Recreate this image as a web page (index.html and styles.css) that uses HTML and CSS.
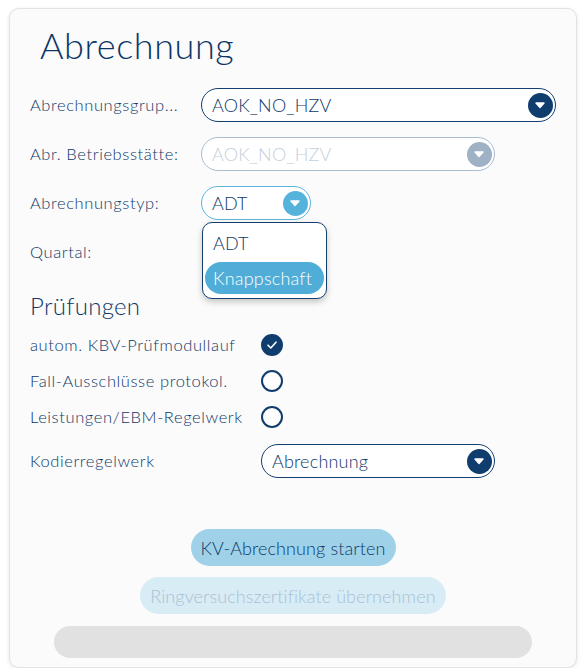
FILE: index.html
```html
<!DOCTYPE html>
<html lang="de">
<head>
<meta charset="utf-8">
<title>Abrechnung</title>
<link rel="stylesheet" href="styles.css">
</head>
<body>
<div class="card">
  <h1 class="title">Abrechnung</h1>

  <div class="form">
    <div class="label">Abrechnungsgrup...</div>
    <div class="select sel-main w-355">
      <span class="value">AOK_NO_HZV</span>
      <span class="arrow"><svg viewBox="-12 -12 24 24" width="24" height="24"><path d="M-4 -2 L4 -2 L0 2.5 Z" fill="#fff" stroke="#fff" stroke-width="1.4" stroke-linejoin="round"/></svg></span>
    </div>

    <div class="label">Abr. Betriebsstätte:</div>
    <div class="select sel-disabled w-294">
      <span class="value">AOK_NO_HZV</span>
      <span class="arrow"><svg viewBox="-12 -12 24 24" width="24" height="24"><path d="M-4 -2 L4 -2 L0 2.5 Z" fill="#fff" stroke="#fff" stroke-width="1.4" stroke-linejoin="round"/></svg></span>
    </div>

    <div class="label">Abrechnungstyp:</div>
    <div class="select-wrap">
      <div class="select sel-active w-110">
        <span class="value">ADT</span>
        <span class="arrow"><svg viewBox="-12 -12 24 24" width="24" height="24"><path d="M-4 -2 L4 -2 L0 2.5 Z" fill="#fff" stroke="#fff" stroke-width="1.4" stroke-linejoin="round"/></svg></span>
      </div>
      <div class="menu">
        <div class="option">ADT</div>
        <div class="option selected">Knappschaft</div>
      </div>
    </div>

    <div class="label">Quartal:</div>
    <div class="empty"></div>
  </div>

  <h2 class="subtitle">Prüfungen</h2>

  <div class="checks">
    <div class="label">autom. KBV-Prüfmodullauf</div>
    <div class="check checked"><svg viewBox="0 0 22 22" width="22" height="22"><path d="M7 11.2 L9.8 14 L15 8.2" fill="none" stroke="#fff" stroke-width="1.6" stroke-linecap="round" stroke-linejoin="round"/></svg></div>

    <div class="label">Fall-Ausschlüsse protokol.</div>
    <div class="check"></div>

    <div class="label">Leistungen/EBM-Regelwerk</div>
    <div class="check"></div>

    <div class="label kod">Kodierregelwerk</div>
    <div class="select sel-main w-234 kod">
      <span class="value">Abrechnung</span>
      <span class="arrow"><svg viewBox="-12 -12 24 24" width="24" height="24"><path d="M-4 -2 L4 -2 L0 2.5 Z" fill="#fff" stroke="#fff" stroke-width="1.4" stroke-linejoin="round"/></svg></span>
    </div>
  </div>

  <div class="actions">
    <button class="btn btn-primary">KV-Abrechnung starten</button>
    <button class="btn btn-disabled">Ringversuchszertifikate übernehmen</button>
    <div class="progress"></div>
  </div>
</div>
</body>
</html>
```

FILE: styles.css
```css
* { box-sizing: border-box; }

html, body {
  margin: 0;
  padding: 0;
  background: #ffffff;
}

body {
  font-family: Lato, "Noto Sans", "Liberation Sans", sans-serif;
  font-weight: 300;
  color: #0f3767;
  padding: 8px 0 0 9px;
}

.card {
  width: 568px;
  height: 660px;
  background: #fbfbfb;
  border: 1px solid #e3e3e3;
  border-radius: 10px;
  box-shadow: 0 1px 4px rgba(0, 0, 0, 0.10);
  padding: 14px 0 0 20px;
  display: flex;
  flex-direction: column;
}

.title {
  margin: 0 0 21px 10px;
  font-size: 36px;
  line-height: 44px;
  font-weight: 300;
  color: #0b3566;
  letter-spacing: 0.6px;
}

.form {
  display: grid;
  grid-template-columns: 171px auto;
  grid-auto-rows: 34px;
  row-gap: 15px;
  align-items: center;
}

.label {
  font-size: 16.5px;
  letter-spacing: 0.6px;
  color: #0e3767;
  white-space: nowrap;
}

.select {
  position: relative;
  height: 34px;
  border-radius: 17px;
  border: 1.5px solid #123f6f;
  background: #ffffff;
  display: flex;
  align-items: center;
  padding-left: 10px;
  font-size: 18px;
  letter-spacing: 0.2px;
  color: #0e3767;
}

.select .value { flex: 1; }

.select .arrow {
  width: 25px;
  height: 25px;
  border-radius: 50%;
  background: #0f3d6e;
  margin-right: 2.5px;
  display: flex;
  align-items: center;
  justify-content: center;
}

.w-355 { width: 355px; }
.w-294 { width: 294px; }
.w-110 { width: 110px; }
.w-234 { width: 234px; }

.sel-disabled {
  border-color: #a9bccf;
  color: #c2cfdc;
}
.sel-disabled .arrow { background: #9fb1c4; }

.sel-active {
  border-color: #5bb6dc;
}
.sel-active .arrow { background: #55b2da; }

.select-wrap {
  position: relative;
  width: 110px;
  height: 34px;
}

.menu {
  position: absolute;
  top: 36px;
  left: 1px;
  width: 125px;
  height: 77px;
  background: #ffffff;
  border: 1.5px solid #143f6e;
  border-radius: 10px;
  box-shadow: 0 3px 6px rgba(0, 0, 0, 0.22);
  padding: 5px 2px 2px 2px;
  z-index: 5;
}

.option {
  height: 30px;
  display: flex;
  align-items: center;
  padding-left: 8px;
  font-size: 18px;
  letter-spacing: 0.2px;
  color: #0e3767;
}

.option.selected {
  margin-top: 4px;
  height: 32px;
  border-radius: 16px;
  background: #4fadd7;
  color: #ffffff;
}

.subtitle {
  margin: 22px 0 0 0;
  font-size: 24px;
  line-height: 30px;
  font-weight: 300;
  color: #0e3767;
  letter-spacing: 0.3px;
}

.checks {
  margin-top: 12px;
  display: grid;
  grid-template-columns: 231px auto;
  grid-template-rows: 24px 24px 24px 34px;
  row-gap: 12px;
  align-items: center;
}

.check {
  width: 22px;
  height: 22px;
  border-radius: 50%;
  border: 2px solid #113d6d;
  background: #ffffff;
}

.check.checked {
  background: #0f3d6e;
  border-color: #0f3d6e;
  display: flex;
  align-items: center;
  justify-content: center;
}
.check.checked svg { margin: -2px; }

.kod { margin-top: 6px; }

.actions {
  margin-left: -20px;
  margin-top: 54px;
  display: flex;
  flex-direction: column;
  align-items: center;
}

.btn {
  font-family: inherit;
  font-weight: 300;
  border: none;
  border-radius: 19px;
  height: 37px;
  font-size: 18px;
  letter-spacing: 0.1px;
  padding: 0;
}

.btn-primary {
  width: 205px;
  background: #9fd2e9;
  color: #0f3a6a;
}

.btn-disabled {
  margin-top: 11px;
  width: 306px;
  background: #d8ecf6;
  color: #a8c1d3;
}

.progress {
  margin-top: 12px;
  width: 478px;
  height: 32px;
  border-radius: 16px;
  background: #e1e1e1;
}
```
